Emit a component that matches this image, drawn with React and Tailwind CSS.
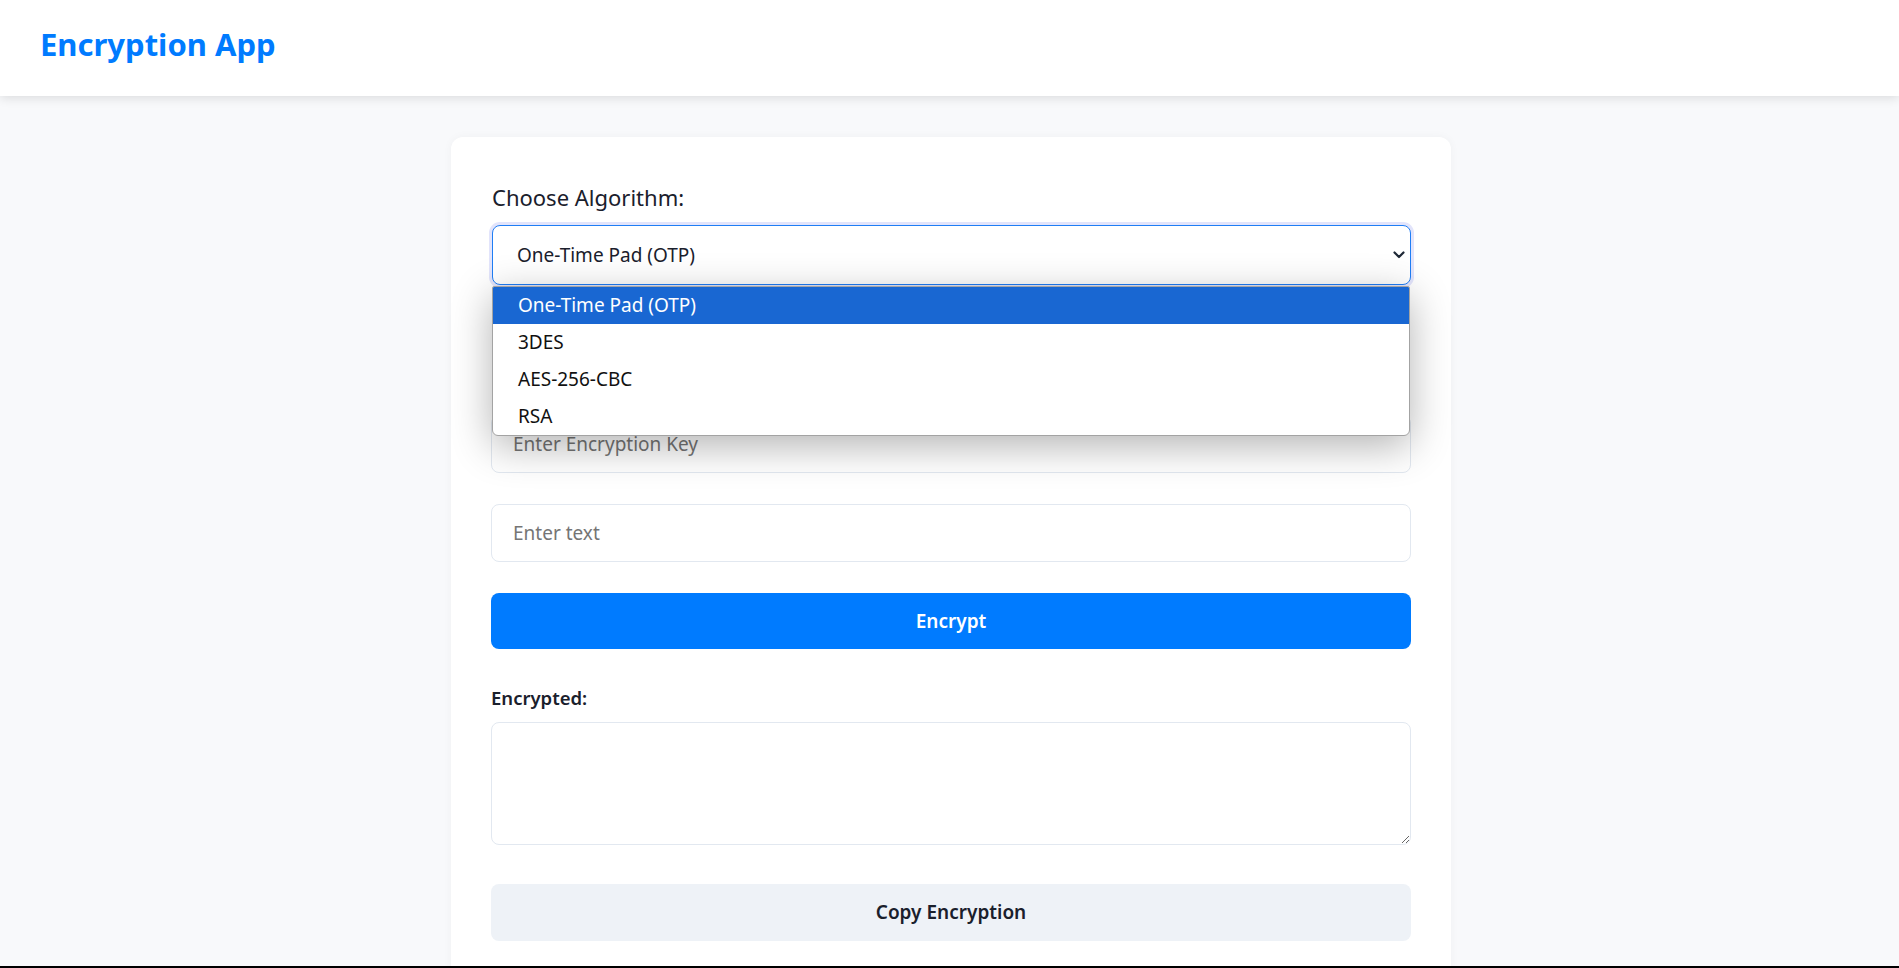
import React from "react";

const font = { fontFamily: '"Noto Sans", "Open Sans", Arial, sans-serif' };

function Chevron() {
  return (
    <svg width="12" height="8" viewBox="0 0 12 8" className="block">
      <polyline points="1.5,1.5 6,6 10.5,1.5" fill="none" stroke="#1f2937" strokeWidth="2.2" strokeLinecap="round" strokeLinejoin="round" />
    </svg>
  );
}

export default function App() {
  const options = ["One-Time Pad (OTP)", "3DES", "AES-256-CBC", "RSA"];
  return (
    <div className="h-[968px] flex flex-col bg-[#f8f9fb] overflow-hidden text-[#1a202c]" style={font}>
      <header className="h-[96px] shrink-0 bg-white shadow-[0_2px_10px_rgba(0,0,0,0.12)] relative z-10 pl-[40px] pt-[25px]">
        <h1 className="text-[31px] leading-[38px] font-bold text-[#007bff]">Encryption App</h1>
      </header>
      <main className="flex-1 overflow-hidden pt-[41px] pl-[3px]">
        <div className="w-[1000px] mx-auto bg-white rounded-[12px] shadow-[0_0_10px_rgba(0,0,0,0.04)] px-[40px] pt-[45px] pb-[40px]">
          <div className="text-[22px] leading-[30px] ml-[1px]">Choose Algorithm:</div>
          <div className="relative mt-[13px] ml-[1px]">
            <div className="h-[60px] rounded-[8px] border border-[#1f7ef5] ring-[3px] ring-[#e2e4fb] bg-white flex items-center justify-between pl-[24px] pr-[5px]">
              <span className="text-[19px] text-[#1a202c]">One-Time Pad (OTP)</span>
              <Chevron />
            </div>
            <div className="absolute left-0 right-[1px] top-[61px] z-20 bg-white border border-[#a3a3a3] rounded-b-[6px] rounded-t-[2px] shadow-[0_10px_40px_rgba(0,0,0,0.3)] overflow-hidden">
              {options.map((o, i) => (
                <div
                  key={o}
                  className={
                    i === 0
                      ? "h-[37px] flex items-center pl-[25px] text-[19px] bg-[#1967d2] text-white"
                      : "h-[37px] flex items-center pl-[25px] text-[19px] text-[#111111]"
                  }
                >
                  {o}
                </div>
              ))}
            </div>
          </div>
          <input
            className="mt-[130px] block w-full h-[58px] rounded-[8px] border border-[#e2e8f0] pl-[21px] text-[19px] outline-none placeholder:text-[#757575]"
            placeholder="Enter Encryption Key"
          />
          <input
            className="mt-[31px] block w-full h-[58px] rounded-[8px] border border-[#e2e8f0] pl-[21px] text-[19px] outline-none placeholder:text-[#757575]"
            placeholder="Enter text"
          />
          <button className="mt-[31px] block w-full h-[56px] rounded-[8px] bg-[#007bff] text-white text-[19px] font-semibold">
            Encrypt
          </button>
          <div className="mt-[36px] text-[18.5px] leading-[26px] font-semibold">Encrypted:</div>
          <textarea className="mt-[11px] block w-full h-[123px] rounded-[8px] border border-[#e2e8f0] outline-none"></textarea>
          <button className="mt-[39px] block w-full h-[57px] rounded-[8px] bg-[#eef2f7] text-[#1a202c] text-[19px] font-semibold">
            Copy Encryption
          </button>
        </div>
      </main>
      <div className="h-[2px] shrink-0 bg-black" />
    </div>
  );
}
